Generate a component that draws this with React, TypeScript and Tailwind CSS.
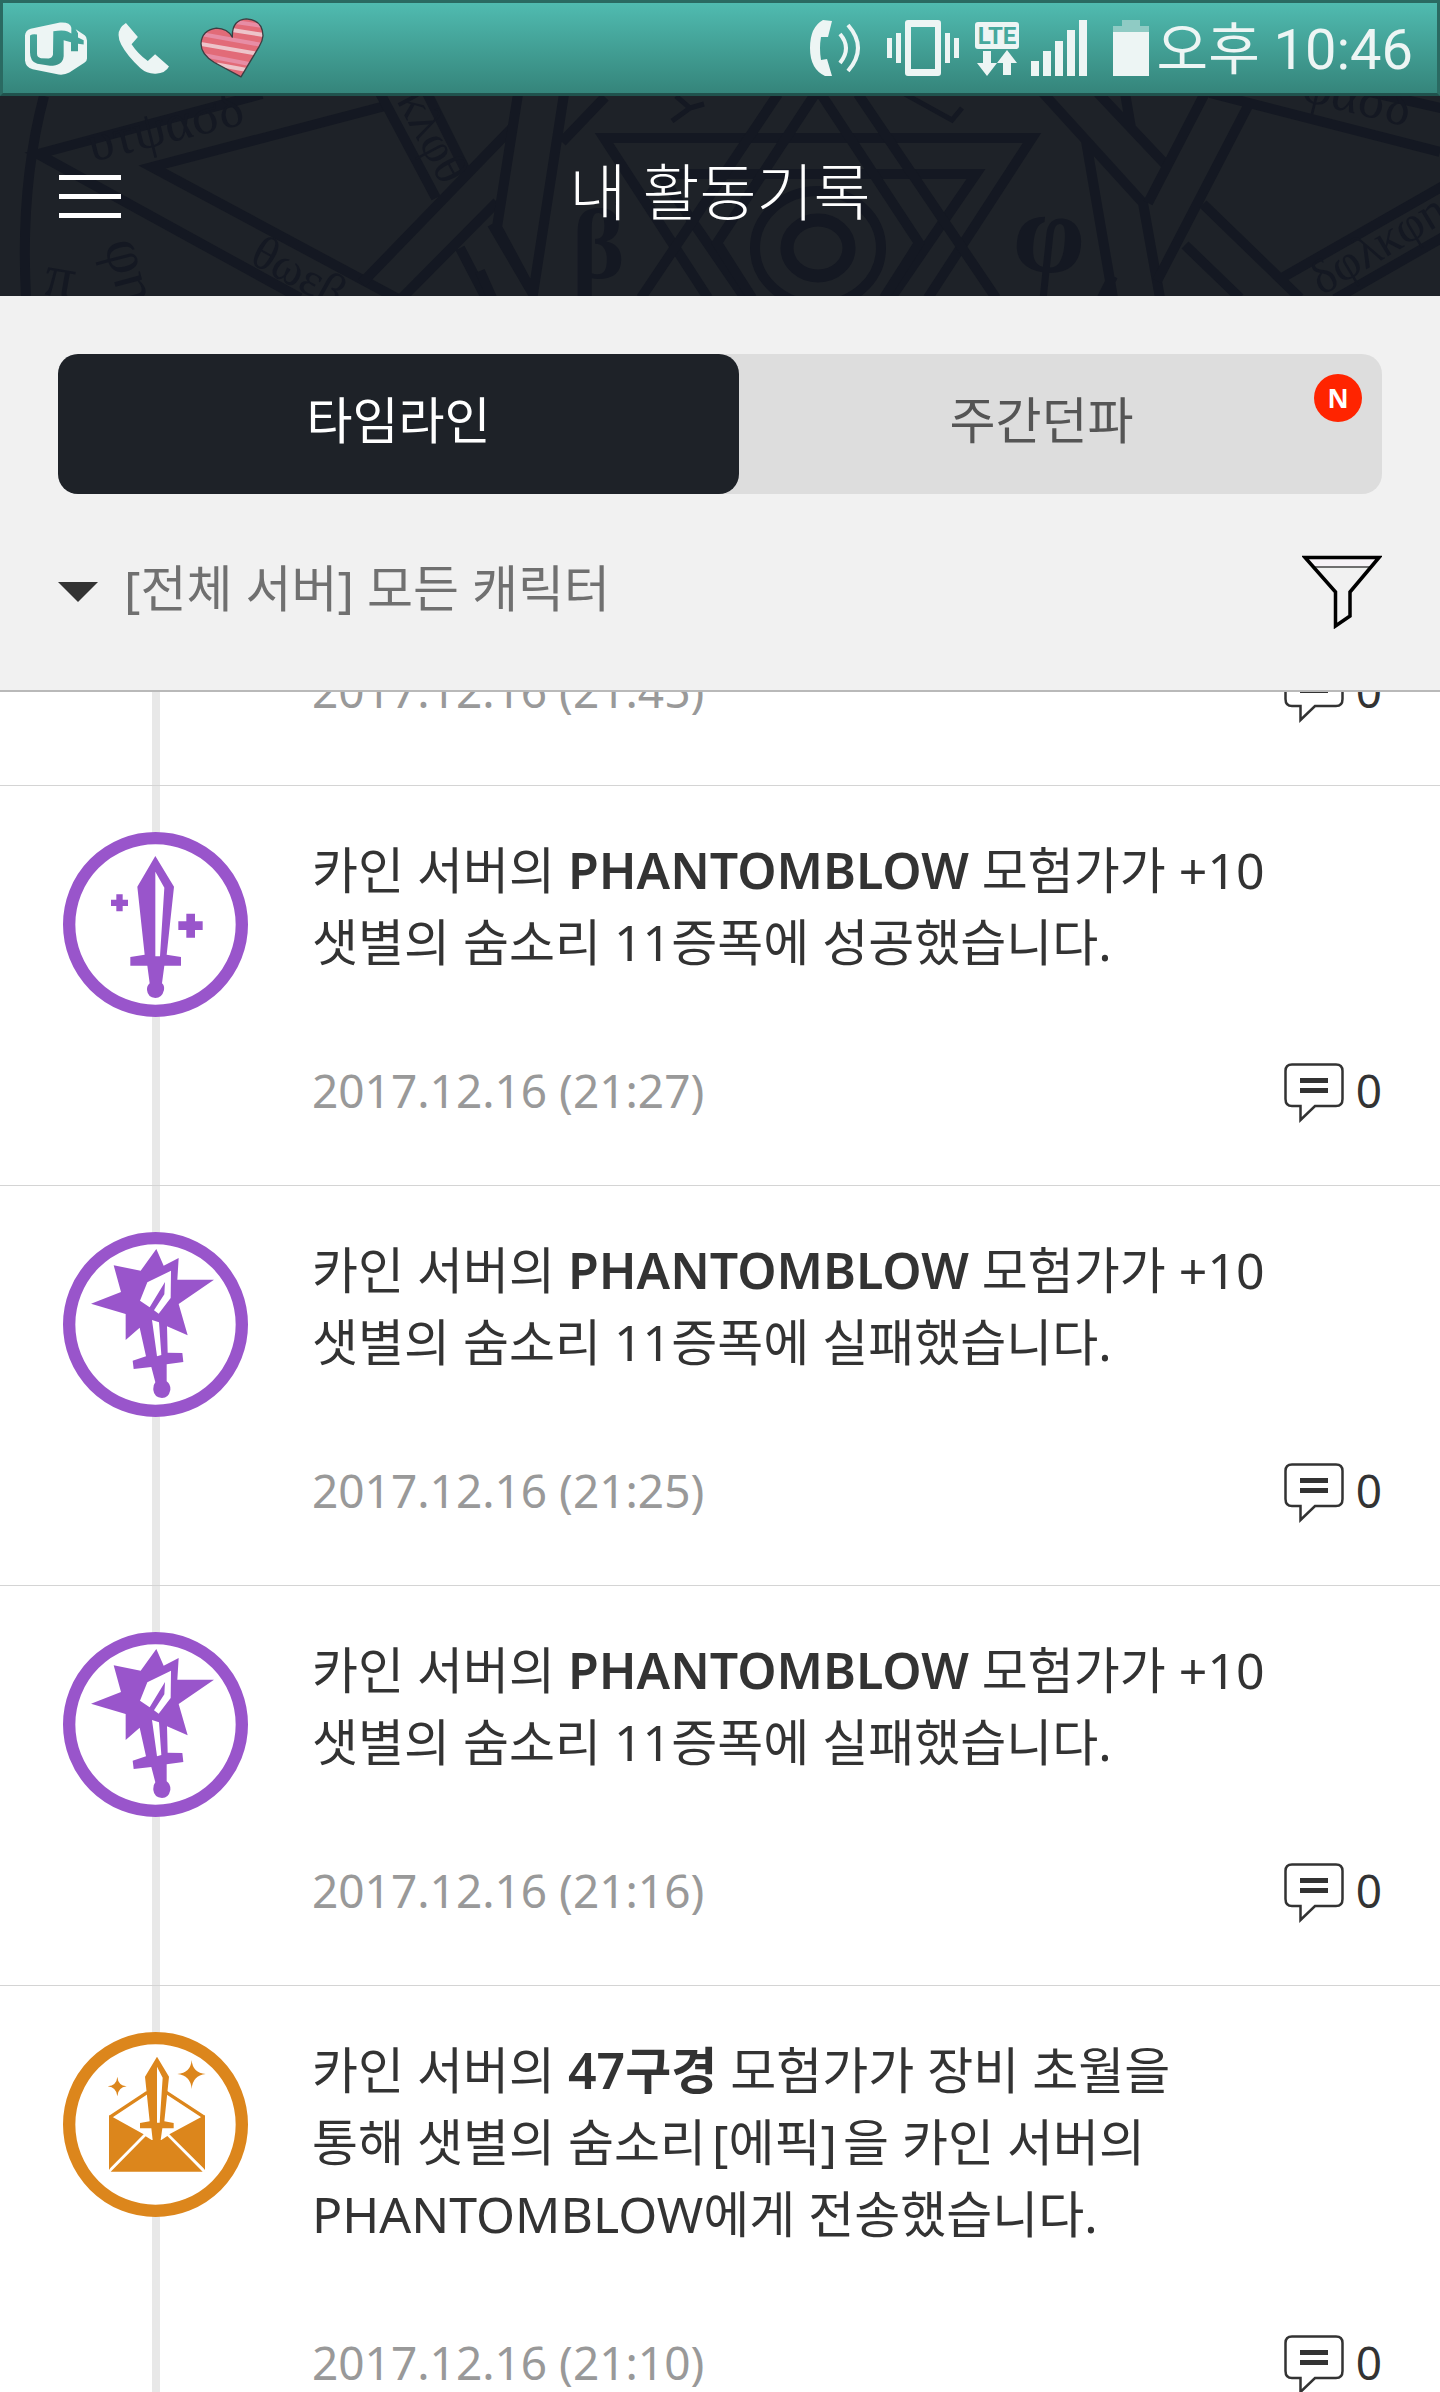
import React from 'react';

type IconKind = 'success' | 'fail' | 'mail';

interface Entry {
  id: number;
  icon?: IconKind;
  message?: React.ReactNode;
  time: string;
  comments: number;
}

const entries: Entry[] = [
  { id: 0, time: '2017.12.16 (21:45)', comments: 0 },
  {
    id: 1,
    icon: 'success',
    message: (
      <>
        카인 서버의 <strong className="font-semibold">PHANTOMBLOW</strong> 모험가가 +10
        <br />
        샛별의 숨소리 11증폭에 성공했습니다.
      </>
    ),
    time: '2017.12.16 (21:27)',
    comments: 0,
  },
  {
    id: 2,
    icon: 'fail',
    message: (
      <>
        카인 서버의 <strong className="font-semibold">PHANTOMBLOW</strong> 모험가가 +10
        <br />
        샛별의 숨소리 11증폭에 실패했습니다.
      </>
    ),
    time: '2017.12.16 (21:25)',
    comments: 0,
  },
  {
    id: 3,
    icon: 'fail',
    message: (
      <>
        카인 서버의 <strong className="font-semibold">PHANTOMBLOW</strong> 모험가가 +10
        <br />
        샛별의 숨소리 11증폭에 실패했습니다.
      </>
    ),
    time: '2017.12.16 (21:16)',
    comments: 0,
  },
  {
    id: 4,
    icon: 'mail',
    message: (
      <>
        카인 서버의 <strong className="font-semibold">47구경</strong> 모험가가 장비 초월을
        <br />
        통해 샛별의 숨소리<span className="mx-1.5">[에픽]</span>을 카인 서버의
        <br />
        PHANTOMBLOW에게 전송했습니다.
      </>
    ),
    time: '2017.12.16 (21:10)',
    comments: 0,
  },
];

function CarrierIcon() {
  return (
    <svg viewBox="75 63 186 158" className="h-[53px] w-[62px]" aria-hidden="true">
      <path
        fill="#edf5f4"
        d="M75 103Q76 88 92 83L180 64Q211 62 214 80L214 97L203 91Q191 86 160 90L159 160Q157 171 146 172L123 171Q111 169 111 158L111 100Q98 97 90 103L90 150Q89 182 112 188L150 194Q188 194 191 165L191 117L213 123L213 150L234 150L234 128L251 130L251 117L234 109L234 96L227 84L254 102Q261 107 261 118L261 172Q261 180 253 185L208 214Q194 222 176 220L98 204Q77 199 75 178Z"
      />
    </svg>
  );
}

function PhoneIcon() {
  return (
    <svg viewBox="354 68 154 154" className="h-[51px] w-[51px]" aria-hidden="true">
      <path
        fill="#edf5f4"
        d="M378 68L414 110L395 132Q414 161 444 183L466 162L508 199Q498 219 468 221Q441 222 422 205Q382 168 364 134Q342 91 378 68Z"
      />
    </svg>
  );
}

function HeartIcon() {
  return (
    <svg viewBox="599 51 192 179" className="h-[60px] w-[64px]" aria-hidden="true">
      <defs>
        <clipPath id="heart">
          <path d="M722 227L642 184Q602 160 602 128Q604 87 648 81Q682 82 696 108Q694 56 738 53Q787 56 788 104Q787 120 776 137Z" />
        </clipPath>
      </defs>
      <g clipPath="url(#heart)">
        <path fill="#e26b78" d="M595 45H795V235H595Z" />
        <path stroke="#e78da5" strokeWidth="12" d="M610 100L800 134M600 160L780 195M690 60L800 76" />
        <path stroke="#edc4ca" strokeWidth="12" d="M595 127L790 161M690 86L800 103M650 190L760 210" />
      </g>
      <path
        fill="none"
        stroke="#3b3f43"
        strokeWidth="4"
        strokeLinejoin="round"
        d="M722 227L642 184Q602 160 602 128Q604 87 648 81Q682 82 696 108Q694 56 738 53Q787 56 788 104Q787 120 776 137Z"
      />
    </svg>
  );
}

function CallIcon() {
  return (
    <svg viewBox="0 0 51 56" className="h-[56px] w-[51px]" aria-hidden="true">
      <path fill="#edf5f4" d="M22 1L18 17L11 17Q9 28 11 40L17 39L22 56H15Q0 49 0 28Q0 7 13 0Z" />
      <path fill="none" stroke="#edf5f4" strokeWidth="4" d="M30 14Q42 28 30 43M38 5Q58 28 38 51" />
    </svg>
  );
}

function VibrateIcon() {
  return (
    <svg viewBox="0 0 72 56" className="h-[56px] w-[72px]" fill="#edf5f4" aria-hidden="true">
      <path d="M0 18h5v20h-5zM9 13h5v30h-5zM58 13h5v30h-5zM67 18h5v20h-5z" />
      <path fillRule="evenodd" d="M21 0h30q3 0 3 3v50q0 3-3 3h-30q-3 0-3-3v-50q0-3 3-3zM24 7v42h24v-42z" />
    </svg>
  );
}

function LteIcon() {
  return (
    <svg viewBox="0 0 44 56" className="h-[56px] w-[44px]" aria-hidden="true">
      <rect y="2" width="44" height="27" rx="3" fill="#edf5f4" />
      <text x="22" y="24" textAnchor="middle" fontFamily="Roboto" fontSize="24" fontWeight="700" fill="#46a99d">
        LTE
      </text>
      <path fill="#edf5f4" d="M8 31h8v12h6l-10 13l-10-13h6zM28 55h8v-12h6l-10-13l-10 13h6z" />
    </svg>
  );
}

function SignalIcon() {
  return (
    <svg viewBox="0 0 56 56" className="h-[56px] w-[56px]" fill="#edf5f4" aria-hidden="true">
      <path d="M0 41h8v15h-8zM12 31h8v25h-8zM24 21h8v35h-8zM36 10h8v46h-8zM48 0h8v56h-8z" />
    </svg>
  );
}

function BatteryIcon() {
  return (
    <svg viewBox="0 0 36 56" className="h-[56px] w-[36px]" aria-hidden="true">
      <path fill="#8fcbc4" d="M9 0h18v6h9v6H0v-6h9z" />
      <path fill="#edf5f4" d="M0 12h36v44H0z" />
    </svg>
  );
}

function StatusBar() {
  return (
    <div className="flex h-24 shrink-0 items-center justify-between border-3 border-[#2a6a62] border-b-[#20524d] bg-linear-to-b from-[#50bbb0] to-[#35857b] pr-6 pl-[22px]">
      <div className="flex items-center gap-[31px]">
        <CarrierIcon />
        <PhoneIcon />
        <HeartIcon />
      </div>
      <div className="flex items-center">
        <CallIcon />
        <span className="ml-[26px]"><VibrateIcon /></span>
        <span className="ml-4"><LteIcon /></span>
        <span className="ml-3"><SignalIcon /></span>
        <span className="ml-[26px]"><BatteryIcon /></span>
        <span className="ml-2 pt-1 font-[Roboto,'Noto_Sans_CJK_KR',sans-serif] text-[56px] leading-[60px] whitespace-nowrap text-[#edf5f4]">
          오후 10:46
        </span>
      </div>
    </div>
  );
}

function HeaderPattern() {
  return (
    <svg
      viewBox="0 0 1440 200"
      preserveAspectRatio="xMidYMid slice"
      className="absolute inset-0 h-full w-full"
      aria-hidden="true"
    >
      <g fill="none" stroke="#141822" strokeWidth="10">
        <path d="M44 0Q20 90 26 200M262 -2L38 58L300 202M385 10L152 71L400 204" />
        <path d="M380 -3L436 102M427 -3L466 75M362 187L513 31M400 204L497 106M460 152L486 202" />
        <path d="M518 -2L497 131L533 198L564 -2M562 46L605 1M480 175L492 202M492 128L533 198" />
        <path d="M708 202L604 42H1032L928 202M745 202L660 78H976L891 202" />
        <path d="M778 -2L641 202M815 -2L717 147L752 202M821 -2L919 147L884 202M858 -2L996 202" />
        <path d="M1043 -3L1143 107L1160 202M1098 -3L1165 68M1125 -3L1131 32M1086 45L1113 202M1113 180L1102 202" />
        <path d="M1205 -3L1148 107M1250 6L1157 185M1210 -3L1440 56M1370 -4L1450 14" />
        <path d="M1203 108L1300 202M1185 149L1240 202M1280 183L1445 89M1335 203L1445 140" />
        <path strokeWidth="5" d="M676 0L690 12L672 25M690 12L704 8M905 -2L952 24L962 12" />
        <ellipse cx="818" cy="152" rx="63" ry="57" />
        <ellipse cx="818" cy="152" rx="31" ry="28" strokeWidth="13" />
      </g>
      <g fill="#141822" fontFamily="'Liberation Serif', serif" fontSize="52">
        <text transform="translate(92 66) rotate(-14)">υτψασδ</text>
        <text transform="translate(396 4) rotate(62)" fontSize="48">κλφθ</text>
        <text transform="translate(248 166) rotate(29)" fontSize="48">θωεβ</text>
        <text transform="translate(1300 4) rotate(14)">φασδ</text>
        <text transform="translate(1322 200) rotate(-31)" fontSize="48">δφλκφη</text>
        <text transform="translate(104 148) rotate(75)" fontSize="60">φη</text>
        <text transform="translate(42 198) rotate(10)" fontSize="60">π</text>
        <text x="572" y="182" fontSize="100" fontWeight="700">β</text>
        <text transform="translate(1010 172) rotate(6)" fontSize="116" fontWeight="700">φ</text>
      </g>
    </svg>
  );
}

function AppHeader() {
  return (
    <header className="relative flex h-50 shrink-0 items-center justify-center overflow-hidden bg-[#1e2228]">
      <HeaderPattern />
      <button type="button" aria-label="메뉴" className="absolute left-[59px] flex w-[62px] flex-col gap-[14px]">
        <span className="h-[5px] bg-white" />
        <span className="h-[5px] bg-white" />
        <span className="h-[5px] bg-white" />
      </button>
      <h1 className="relative pb-2 text-[62px] leading-[80px] font-light text-white">내 활동기록</h1>
    </header>
  );
}

function FilterIcon() {
  return (
    <svg viewBox="0 0 80 74" className="h-[74px] w-[80px]" aria-hidden="true">
      <path fill="#f7f3f7" d="M6 2H74L68 12H12Z" />
      <path stroke="#444" strokeWidth="1.5" d="M12 12H68" />
      <path fill="none" stroke="#000" strokeWidth="3.5" d="M3 2.500H77L48 37V61L33.500 71V37Z" />
    </svg>
  );
}

function FilterPanel() {
  return (
    <section className="shrink-0 border-b-2 border-[#b9b9b9] bg-[#f1f1f1] px-[58px] pt-[58px] pb-[61px]">
      <div role="tablist" className="flex h-[140px] rounded-[20px] bg-[#ddd] text-[50px] leading-[60px]">
        <button
          type="button"
          role="tab"
          aria-selected="true"
          className="relative z-10 flex-1 rounded-[20px] bg-[#1e2228] pb-2 text-white"
        >
          타임라인
        </button>
        <button
          type="button"
          role="tab"
          aria-selected="false"
          className="relative -ml-[38px] flex-1 rounded-[20px] pb-2 text-[#555]"
        >
          주간던파
          <span className="absolute top-5 right-5 flex size-12 items-center justify-center rounded-full bg-[#ff2400] text-[26px] leading-none font-bold text-white">
            N
          </span>
        </button>
      </div>
      <div className="mt-[61px] flex h-[74px] items-center justify-between">
        <label className="flex items-center gap-[26px]">
          <svg viewBox="0 0 40 20" className="h-5 w-10" aria-hidden="true">
            <path fill="#333" d="M0 0H40L20 20Z" />
          </svg>
          <select
            aria-label="캐릭터 선택"
            className="appearance-none bg-transparent pb-2 text-[50px] leading-[64px] text-[#707070]"
          >
            <option>[전체 서버] 모든 캐릭터</option>
          </select>
        </label>
        <button type="button" aria-label="필터">
          <FilterIcon />
        </button>
      </div>
    </section>
  );
}

function EntryIcon({ kind }: { kind: IconKind }) {
  const color = kind === 'mail' ? '#dc861c' : '#9955cb';
  return (
    <svg viewBox="69 96 555 555" className="relative size-[185px]" aria-hidden="true">
      <circle cx="346.500" cy="373.500" r="259" fill="#fff" stroke={color} strokeWidth="37" />
      {kind === 'success' && (
        <g fill={color}>
          <path
            fillRule="evenodd"
            d="M346 168L402 260L380 464L423 471V497H373L366 550Q374 556 372 570Q366 594 346 594Q323 592 321 570Q320 558 329 550L322 497H271V471L314 464L292 260ZM346 215V469H360L373 263Z"
          />
          <path d="M229 283H248V299H264V318H248V334H229V318H213V299H229ZM439 341H465V364H488V390H465V413H439V390H415V364H439Z" />
        </g>
      )}
      {kind === 'fail' && (
        <g fill={color}>
          <path
            fillRule="evenodd"
            d="M349 147L371 197L416 174L412 239H522L416 312L443 406L381 379L383 458L427 459L430 486L380 493V544Q392 552 391 570Q386 594 366 594Q342 592 340 570Q339 555 346 547L334 501L281 507L278 482L318 469L299 383L257 420V342L153 311L243 276L221 196L302 212ZM393 212L322 247L300 302L329 322L375 246L373 283L342 331L356 341L392 294ZM336 360L351 469L364 465L357 367Z"
          />
        </g>
      )}
      {kind === 'mail' && (
        <g fill={color}>
          <path d="M207 345L311 403L211 504L207 510ZM495 345V510L490 504L388 403ZM317 409L335 420H364L382 408L488 515H212Z" />
          <path fill="none" stroke={color} strokeWidth="10" d="M212 350L322 277M379 277L490 350" />
          <path
            fillRule="evenodd"
            d="M351 170L387 230L373 364L401 369V385H367L362 420H338L334 385H300V369L329 364L315 230ZM351 200V368H359L368 233Z"
          />
          <path d="M232 230Q234 256 260 259Q234 262 232 289Q230 262 203 259Q230 256 232 230ZM455 180Q458 219 497 222Q458 226 455 267Q452 226 412 222Q452 219 455 180Z" />
        </g>
      )}
    </svg>
  );
}

function CommentIcon() {
  return (
    <svg viewBox="0 0 60 60" className="mt-[3px] size-[60px]" aria-hidden="true">
      <path
        fill="none"
        stroke="#333"
        strokeWidth="2.500"
        d="M8 1.500H52Q58.500 1.500 58.500 8V36Q58.500 43 52 43H31L16.500 57V43H8Q1.500 43 1.500 36V8Q1.500 1.500 8 1.500Z"
      />
      <path fill="#333" d="M16 15H44V20H16ZM16 25H44V30H16Z" />
    </svg>
  );
}

function TimelineEntry({ entry }: { entry: Entry }) {
  return (
    <li className="relative flex border-b border-[#d4d4d4] pr-[58px] pb-[65px] pl-[63px]">
      <span className="absolute inset-y-0 left-[152px] w-2 bg-[#e8e8e8]" />
      <div className="w-[249px] shrink-0 pt-[46px]">{entry.icon && <EntryIcon kind={entry.icon} />}</div>
      <div className="flex-1">
        {entry.message && (
          <p className="pt-12 pb-[82px] text-[50px] leading-[72px] whitespace-nowrap text-[#333]">{entry.message}</p>
        )}
        <div className="flex h-[60px] items-start justify-between">
          <time className="text-[46px] leading-[60px] text-[#999]">{entry.time}</time>
          <button type="button" aria-label="댓글" className="flex items-start gap-3 text-[46px] leading-[60px] text-[#333]">
            <CommentIcon />
            <span>{entry.comments}</span>
          </button>
        </div>
      </div>
    </li>
  );
}

export default function App() {
  return (
    <div className="flex h-screen flex-col overflow-hidden bg-white font-['Noto_Sans','Noto_Sans_CJK_KR',sans-serif]">
      <StatusBar />
      <AppHeader />
      <FilterPanel />
      <main className="flex-1 overflow-hidden">
        <ul className="-mt-[32px]">
          {entries.map((entry) => (
            <TimelineEntry key={entry.id} entry={entry} />
          ))}
        </ul>
      </main>
    </div>
  );
}
